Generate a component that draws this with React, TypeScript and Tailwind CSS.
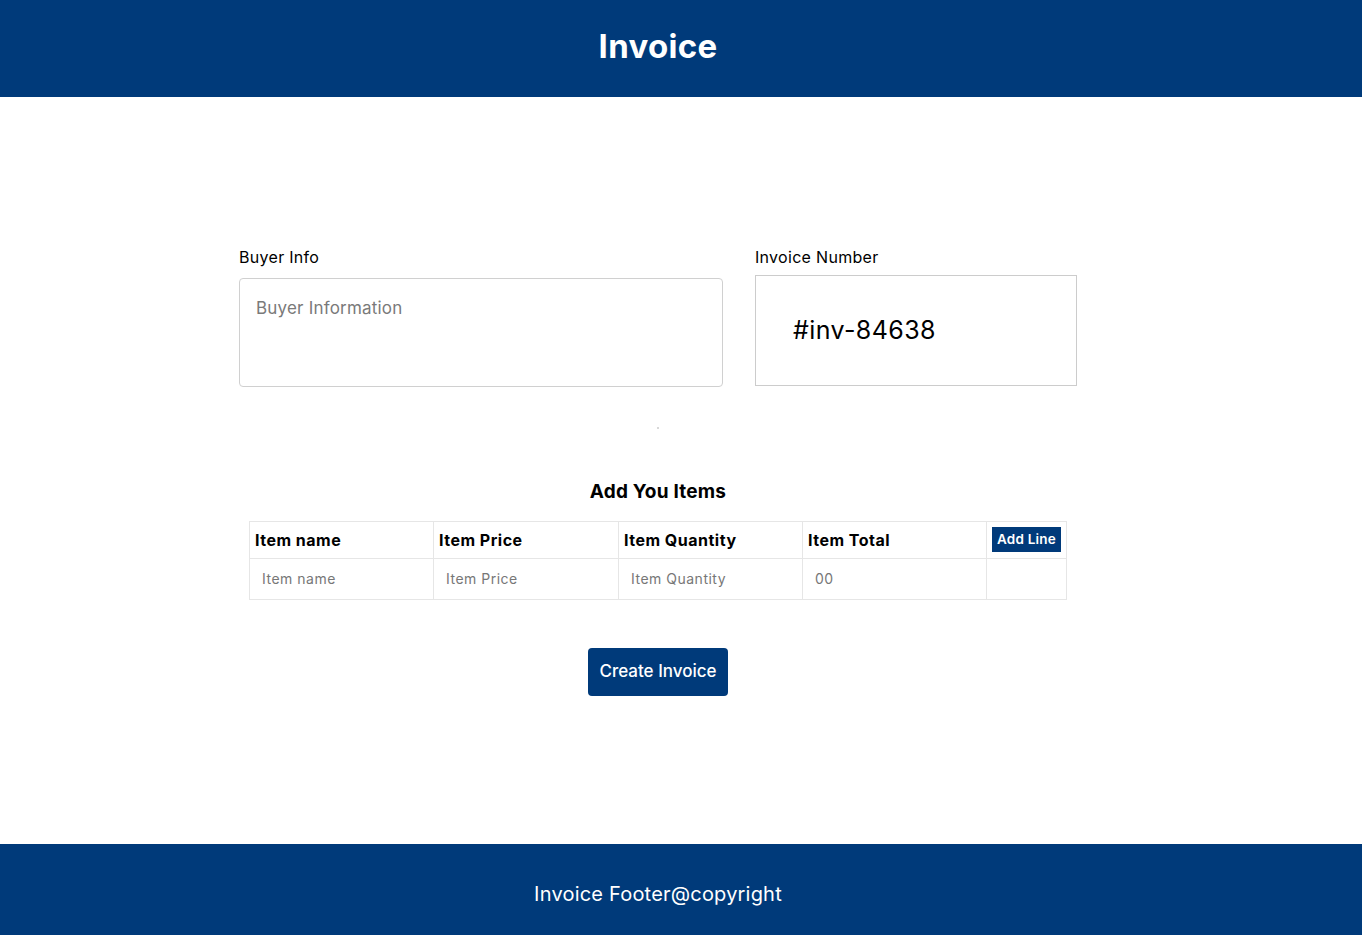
import { useState } from "react";

const font = { fontFamily: "Inter, 'Noto Sans', sans-serif" };

export default function App() {
  const [buyer, setBuyer] = useState("");

  return (
    <div style={font} className="flex min-h-screen flex-col bg-white text-black">
      <header className="flex h-[97px] bg-[#003a7a]">
        <div className="flex w-[1316px] items-center justify-center pb-[3px]">
          <h1 className="text-[33px] font-bold tracking-[0.3px] text-white">Invoice</h1>
        </div>
      </header>

      <main className="flex flex-1">
        <div className="flex w-[1316px] flex-col items-center pt-[148px]">
          <div className="flex w-[838px] gap-8">
            <div className="flex w-[484px] flex-col">
              <label htmlFor="buyer" className="text-[16px] leading-6 tracking-[0.3px]">
                Buyer Info
              </label>
              <textarea
                id="buyer"
                value={buyer}
                onChange={(e) => setBuyer(e.target.value)}
                placeholder="Buyer Information"
                className="mt-[9px] h-[109px] resize-none rounded border border-[#d0d0d0] px-4 py-[17px] text-[17px] tracking-[0.2px] placeholder:text-[#7a7a7a] outline-none"
              />
            </div>

            <div className="flex w-[322px] flex-col">
              <span className="text-[16px] leading-6 tracking-[0.3px]">Invoice Number</span>
              <div className="mt-[6px] flex h-[111px] items-center border border-[#cccccc] pl-[37px] text-[25px] tracking-[0.4px]">
                #inv-84638
              </div>
            </div>
          </div>

          <div className="mt-10 h-[2px] w-[2px] bg-[#d8d8d8]" />

          <h2 className="mt-[49px] text-[19px] font-bold tracking-[0.2px]">Add You Items</h2>

          <table className="mt-[14px] w-[818px] border-collapse text-left">
            <thead>
              <tr className="h-[37px] text-[16px] font-bold tracking-[0.5px]">
                <th className="w-[184px] border border-[#e6e6e6] px-[5px]">Item name</th>
                <th className="w-[185px] border border-[#e6e6e6] px-[5px]">Item Price</th>
                <th className="w-[184px] border border-[#e6e6e6] px-[5px]">Item Quantity</th>
                <th className="w-[184px] border border-[#e6e6e6] px-[5px]">Item Total</th>
                <th className="border border-[#e6e6e6] px-[5px] py-0">
                  <button className="block h-[25px] w-[69px] whitespace-nowrap bg-[#003a7a] text-[13.5px] leading-[25px] font-semibold tracking-[0.2px] text-white">
                    Add Line
                  </button>
                </th>
              </tr>
            </thead>
            <tbody>
              <tr className="h-[41px] text-[14px] tracking-[0.5px] text-[#777777]">
                <td className="border border-[#e6e6e6] pl-[12px]">Item name</td>
                <td className="border border-[#e6e6e6] pl-[12px]">Item Price</td>
                <td className="border border-[#e6e6e6] pl-[12px]">Item Quantity</td>
                <td className="border border-[#e6e6e6] pl-[12px]">00</td>
                <td className="border border-[#e6e6e6]"></td>
              </tr>
            </tbody>
          </table>

          <button className="mt-[48px] h-[48px] w-[140px] rounded bg-[#003a7a] text-[17px] font-medium text-white">
            Create Invoice
          </button>
        </div>
      </main>

      <footer className="flex h-[91px] bg-[#003a7a]">
        <div className="flex w-[1316px] items-center justify-center pt-[8px]">
          <p className="text-[20px] tracking-[0.2px] text-white">Invoice Footer@copyright</p>
        </div>
      </footer>
    </div>
  );
}
